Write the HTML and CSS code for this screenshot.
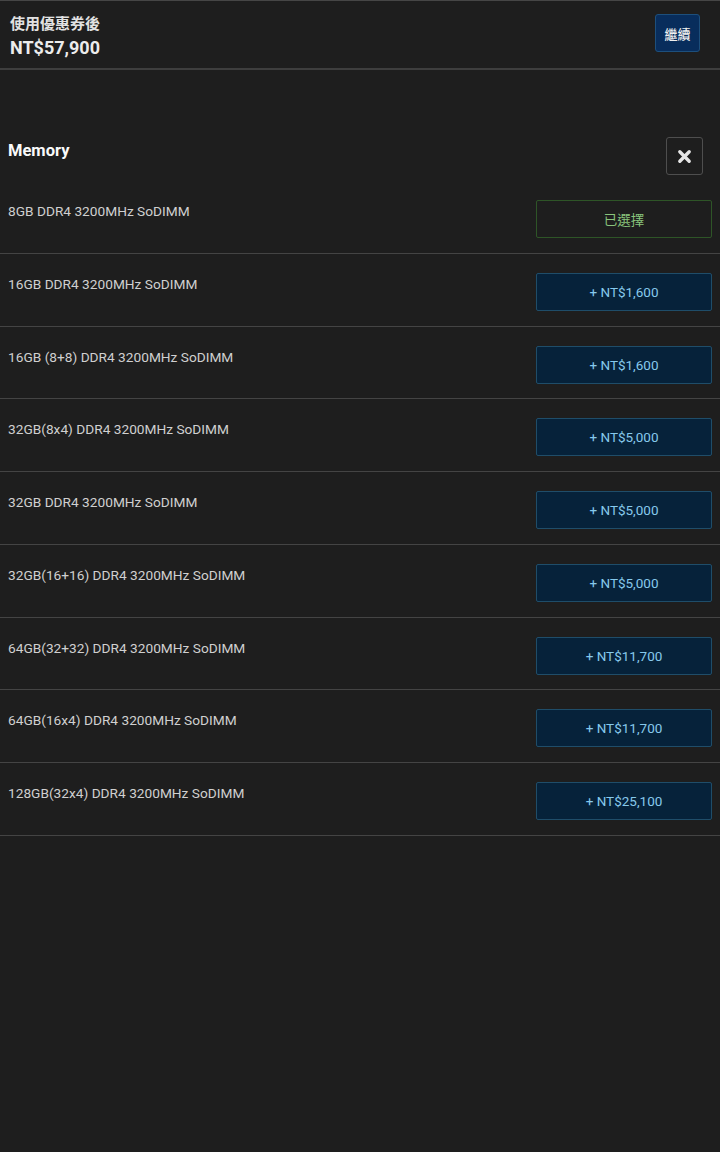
FILE: index.html
```html
<!DOCTYPE html>
<html lang="zh-Hant">
<head>
  <meta charset="UTF-8" />
  <meta name="viewport" content="width=device-width, initial-scale=1" />
  <title>Memory | 選購</title>
  <link rel="stylesheet" href="styles.css">
</head>
<body>

  <!-- Price summary -->
  <div class="summary">
    <div class="summary-text">
      <div class="summary-label">使用優惠券後</div>
      <div class="summary-price">NT$57,900</div>
    </div>
    <button class="continue-btn">繼續</button>
  </div>

  <section class="options">
    <div class="options-head">
      <h2>Memory</h2>
      <button class="close-btn" aria-label="Close">
        <svg viewBox="0 0 16 16" width="15" height="15">
          <path d="M3 3 L13 13 M13 3 L3 13" stroke="#e6e6e6" stroke-width="3.6" stroke-linecap="round" />
        </svg>
      </button>
    </div>

    <div class="option first">
      <span class="option-name">8GB DDR4 3200MHz SoDIMM</span>
      <button class="pick selected">已選擇</button>
    </div>
    <div class="option">
      <span class="option-name">16GB DDR4 3200MHz SoDIMM</span>
      <button class="pick">+ NT$1,600</button>
    </div>
    <div class="option">
      <span class="option-name">16GB (8+8) DDR4 3200MHz SoDIMM</span>
      <button class="pick">+ NT$1,600</button>
    </div>
    <div class="option">
      <span class="option-name">32GB(8x4) DDR4 3200MHz SoDIMM</span>
      <button class="pick">+ NT$5,000</button>
    </div>
    <div class="option">
      <span class="option-name">32GB DDR4 3200MHz SoDIMM</span>
      <button class="pick">+ NT$5,000</button>
    </div>
    <div class="option">
      <span class="option-name">32GB(16+16) DDR4 3200MHz SoDIMM</span>
      <button class="pick">+ NT$5,000</button>
    </div>
    <div class="option">
      <span class="option-name">64GB(32+32) DDR4 3200MHz SoDIMM</span>
      <button class="pick">+ NT$11,700</button>
    </div>
    <div class="option">
      <span class="option-name">64GB(16x4) DDR4 3200MHz SoDIMM</span>
      <button class="pick">+ NT$11,700</button>
    </div>
    <div class="option">
      <span class="option-name">128GB(32x4) DDR4 3200MHz SoDIMM</span>
      <button class="pick">+ NT$25,100</button>
    </div>
  </section>

</body>
</html>
```

FILE: styles.css
```css
/* Base */
body {
  margin: 0;
  background: #1e1e1e;
  color: #d2d2d2;
  font-family: Roboto, "Noto Sans CJK TC", sans-serif;
}

button {
  font-family: inherit;
  cursor: pointer;
}

/* Summary bar */
.summary {
  display: flex;
  justify-content: space-between;
  align-items: flex-start;
  height: 67px;
  box-sizing: content-box;
  padding: 0 20px 0 10px;
  border-top: 1px solid #464646;
  border-bottom: 2px solid #3e3e3e;
}

.summary-text {
  padding-top: 13px;
}

.summary-label {
  font-size: 15px;
  font-weight: 700;
  color: #e2e2e2;
  line-height: 20px;
}

.summary-price {
  margin-top: 3px;
  font-size: 18px;
  font-weight: 700;
  color: #ececec;
  line-height: 22px;
}

.continue-btn {
  margin-top: 13px;
  width: 45px;
  height: 38px;
  padding: 0;
  background: #082d5c;
  border: 1px solid #1d4f7c;
  border-radius: 3px;
  color: #f0f0f0;
  font-size: 13px;
  font-weight: 500;
}

/* Option list */
.options {
  margin-top: 67px;
}

.options-head {
  display: flex;
  justify-content: space-between;
  align-items: flex-start;
  padding: 0 17px 6px 8px;
}

.options-head h2 {
  margin: 3px 0 0;
  font-size: 16.5px;
  font-weight: 700;
  color: #fafafa;
  line-height: 22px;
}

.close-btn {
  width: 37px;
  height: 38px;
  padding: 0;
  display: flex;
  align-items: center;
  justify-content: center;
  background: transparent;
  border: 1px solid #4e4e4e;
  border-radius: 3px;
}

.option {
  display: flex;
  justify-content: space-between;
  align-items: flex-start;
  height: 72.75px;
  padding: 0 8px;
  box-sizing: border-box;
  border-bottom: 1px solid #444;
}

.option-name {
  margin-top: 20px;
  font-size: 13.7px;
  line-height: 20px;
  color: #d0d0d0;
}

.pick {
  margin-top: 19px;
  width: 176px;
  height: 38px;
  padding: 0;
  background: #06223a;
  border: 1px solid #1f4d69;
  border-radius: 2px;
  color: #86c9ec;
  font-size: 13.5px;
}

.pick.selected {
  background: transparent;
  border-color: #2e5527;
  color: #89c47c;
}
```
